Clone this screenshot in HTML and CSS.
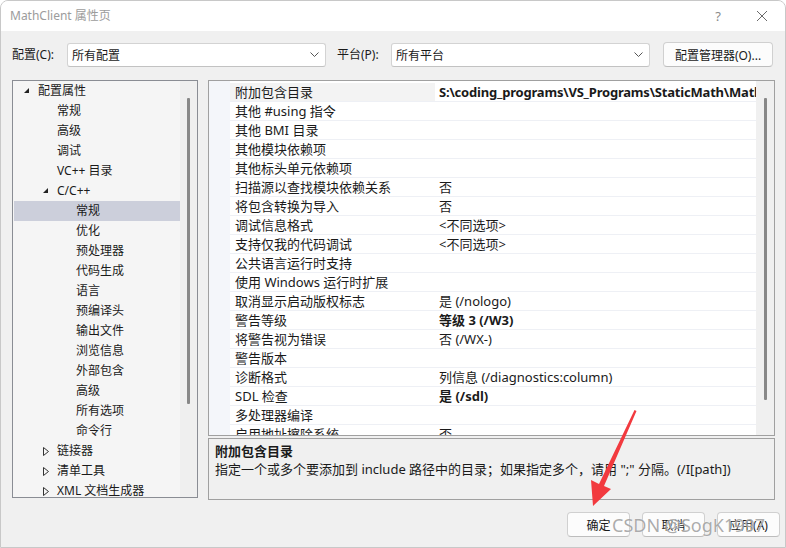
FILE: index.html
```html
<!DOCTYPE html>
<html lang="zh-CN">
<head>
    <meta charset="UTF-8">
    <title>MathClient 属性页</title>
    <link rel="stylesheet" href="styles.css">
</head>
<body>
    <div class="window">
        <div class="titlebar">
            <span class="title">MathClient 属性页</span>
            <span class="help">?</span>
            <svg class="close" width="12" height="12" viewBox="0 0 12 12">
                <path d="M1 1 L11 11 M11 1 L1 11" stroke="#6a6a6a" stroke-width="1" fill="none"/>
            </svg>
        </div>

        <div class="toolbar">
            <span class="label label-config">配置(C):</span>
            <div class="combo">
                <span>所有配置</span>
                <svg width="9" height="5" viewBox="0 0 9 5"><path d="M0.5 0.5 L4.5 4.5 L8.5 0.5" stroke="#555" fill="none"/></svg>
            </div>
            <span class="label label-platform">平台(P):</span>
            <div class="combo">
                <span>所有平台</span>
                <svg width="9" height="5" viewBox="0 0 9 5"><path d="M0.5 0.5 L4.5 4.5 L8.5 0.5" stroke="#555" fill="none"/></svg>
            </div>
            <div class="btn btn-manager">配置管理器(O)...</div>
        </div>

        <div class="main">
            <!-- property tree -->
            <div class="tree">
                <div class="tree-list">
                    <div class="node lvl0"><span class="arrow"><svg width="6" height="6" viewBox="0 0 6 6"><polygon points="5,0 5,5 0,5" fill="#222"/></svg></span>配置属性</div>
                    <div class="node lvl1"><span class="arrow"></span>常规</div>
                    <div class="node lvl1"><span class="arrow"></span>高级</div>
                    <div class="node lvl1"><span class="arrow"></span>调试</div>
                    <div class="node lvl1"><span class="arrow"></span>VC++ 目录</div>
                    <div class="node lvl1"><span class="arrow"><svg width="6" height="6" viewBox="0 0 6 6"><polygon points="5,0 5,5 0,5" fill="#222"/></svg></span>C/C++</div>
                    <div class="node lvl2 selected"><span class="arrow"></span>常规</div>
                    <div class="node lvl2"><span class="arrow"></span>优化</div>
                    <div class="node lvl2"><span class="arrow"></span>预处理器</div>
                    <div class="node lvl2"><span class="arrow"></span>代码生成</div>
                    <div class="node lvl2"><span class="arrow"></span>语言</div>
                    <div class="node lvl2"><span class="arrow"></span>预编译头</div>
                    <div class="node lvl2"><span class="arrow"></span>输出文件</div>
                    <div class="node lvl2"><span class="arrow"></span>浏览信息</div>
                    <div class="node lvl2"><span class="arrow"></span>外部包含</div>
                    <div class="node lvl2"><span class="arrow"></span>高级</div>
                    <div class="node lvl2"><span class="arrow"></span>所有选项</div>
                    <div class="node lvl2"><span class="arrow"></span>命令行</div>
                    <div class="node lvl1"><span class="arrow"><svg width="6" height="9" viewBox="0 0 6 9"><polygon points="0.5,0.5 5.5,4.5 0.5,8.5" fill="none" stroke="#333"/></svg></span>链接器</div>
                    <div class="node lvl1"><span class="arrow"><svg width="6" height="9" viewBox="0 0 6 9"><polygon points="0.5,0.5 5.5,4.5 0.5,8.5" fill="none" stroke="#333"/></svg></span>清单工具</div>
                    <div class="node lvl1"><span class="arrow"><svg width="6" height="9" viewBox="0 0 6 9"><polygon points="0.5,0.5 5.5,4.5 0.5,8.5" fill="none" stroke="#333"/></svg></span>XML 文档生成器</div>
                </div>
                <div class="scroll"><div class="thumb tree-thumb"></div></div>
            </div>

            <div class="right">
                <!-- property grid -->
                <div class="grid">
                    <div class="gutter"></div>
                    <div class="rows">
                        <div class="row first"><div class="name">附加包含目录</div><div class="value bold path">S:\coding_programs\VS_Programs\StaticMath\MathLib\include</div></div>
                        <div class="row"><div class="name">其他 #using 指令</div><div class="value"></div></div>
                        <div class="row"><div class="name">其他 BMI 目录</div><div class="value"></div></div>
                        <div class="row"><div class="name">其他模块依赖项</div><div class="value"></div></div>
                        <div class="row"><div class="name">其他标头单元依赖项</div><div class="value"></div></div>
                        <div class="row"><div class="name">扫描源以查找模块依赖关系</div><div class="value">否</div></div>
                        <div class="row"><div class="name">将包含转换为导入</div><div class="value">否</div></div>
                        <div class="row"><div class="name">调试信息格式</div><div class="value">&lt;不同选项&gt;</div></div>
                        <div class="row"><div class="name">支持仅我的代码调试</div><div class="value">&lt;不同选项&gt;</div></div>
                        <div class="row"><div class="name">公共语言运行时支持</div><div class="value"></div></div>
                        <div class="row"><div class="name">使用 Windows 运行时扩展</div><div class="value"></div></div>
                        <div class="row"><div class="name">取消显示启动版权标志</div><div class="value">是 (/nologo)</div></div>
                        <div class="row"><div class="name">警告等级</div><div class="value bold">等级 3 (/W3)</div></div>
                        <div class="row"><div class="name">将警告视为错误</div><div class="value">否 (/WX-)</div></div>
                        <div class="row"><div class="name">警告版本</div><div class="value"></div></div>
                        <div class="row"><div class="name">诊断格式</div><div class="value">列信息 (/diagnostics:column)</div></div>
                        <div class="row"><div class="name">SDL 检查</div><div class="value bold">是 (/sdl)</div></div>
                        <div class="row"><div class="name">多处理器编译</div><div class="value"></div></div>
                        <div class="row"><div class="name">启用地址擦除系统</div><div class="value">否</div></div>
                    </div>
                    <div class="scroll grid-scroll"><div class="thumb grid-thumb"></div></div>
                </div>

                <div class="desc">
                    <div class="desc-title">附加包含目录</div>
                    <div class="desc-text">指定一个或多个要添加到 include 路径中的目录；如果指定多个，请用 ";" 分隔。(/I[path])</div>
                </div>
            </div>
        </div>

        <div class="footer">
            <div class="btn">确定</div>
            <div class="btn">取消</div>
            <div class="btn">应用(A)</div>
        </div>

        <!-- annotation overlays -->
        <svg class="red-arrow" width="786" height="548" viewBox="0 0 786 548">
            <polygon points="634.5,410 636.5,411 604,486 611,489 593,506 591,480 599,484" fill="#f23a3f"/>
        </svg>
        <div class="watermark">CSDN @SogK1997</div>
    </div>
</body>
</html>
```

FILE: styles.css
```css
/* Reset */
body, html {
    margin: 0;
    padding: 0;
    background: #ffffff;
    font-family: "Noto Sans", "Noto Sans CJK SC", sans-serif;
    font-size: 12px;
    color: #1a1a1a;
}

.window {
    position: relative;
    width: 786px;
    height: 548px;
    box-sizing: border-box;
    border: 1px solid #c8c8c8;
    border-radius: 8px 8px 0 0;
    background: #f0f0f0;
    overflow: hidden;
}

/* Title bar */
.titlebar {
    height: 30px;
    background: #ffffff;
    display: flex;
    align-items: center;
    padding-left: 9px;
}

.title {
    color: #9c9c9c;
    font-size: 12px;
    margin-top: -2px;
}

.help {
    margin-left: auto;
    color: #8a8a8a;
    font-size: 13px;
}

.close {
    margin-left: 35px;
    margin-right: 17px;
}

/* Configuration row */
.toolbar {
    display: flex;
    align-items: center;
    height: 25px;
    padding: 11px 0 0 11px;
}

.label {
    line-height: 16px;
}

.label-config {
    width: 55px;
}

.label-platform {
    width: 54px;
    margin-left: 11px;
}

.combo {
    width: 259px;
    height: 24px;
    box-sizing: border-box;
    background: #ffffff;
    border: 1px solid #d3d3d3;
    border-bottom-color: #c2c2c2;
    border-radius: 3px;
    display: flex;
    align-items: center;
    justify-content: space-between;
    padding: 0 6px 0 4px;
}

.btn {
    width: 63px;
    height: 25px;
    box-sizing: border-box;
    background: #fcfcfc;
    border: 1px solid #d0d0d0;
    border-bottom-color: #bdbdbd;
    border-radius: 4px;
    display: flex;
    align-items: center;
    justify-content: center;
}

.btn-manager {
    width: 110px;
    margin-left: 13px;
}

/* Main area */
.main {
    display: flex;
    gap: 10px;
    margin-top: 13px;
    padding-left: 11px;
}

.tree {
    width: 186px;
    height: 418px;
    box-sizing: border-box;
    border: 1px solid #8a8d94;
    background: #f5f5f5;
    display: flex;
    overflow: hidden;
}

.tree-list {
    flex: 1;
    padding-left: 1px;
}

.node {
    height: 20px;
    line-height: 20px;
    display: flex;
    align-items: center;
    white-space: nowrap;
}

.node.lvl0 { padding-left: 10px; }
.node.lvl1 { padding-left: 29px; }
.node.lvl2 { padding-left: 48px; }

.node.selected {
    background: #cccfdb;
}

.arrow {
    width: 14px;
    display: flex;
    align-items: center;
}

.scroll {
    width: 17px;
    flex-shrink: 0;
    background: #efefef;
    padding-top: 17px;
    box-sizing: border-box;
}

.thumb {
    width: 3px;
    margin-left: 7px;
    background: #888888;
    border-radius: 1px;
}

.tree-thumb {
    height: 306px;
}

.right {
    width: 567px;
    display: flex;
    flex-direction: column;
    gap: 2px;
}

/* Property grid */
.grid {
    height: 356px;
    box-sizing: border-box;
    border: 1px solid #a0a0a0;
    background: #ffffff;
    display: flex;
    overflow: hidden;
    font-size: 13px;
}

.gutter {
    width: 21px;
    background: #f4f6fa;
}

.rows {
    width: 526px;
    padding-top: 2px;
}

.row {
    display: flex;
    height: 19px;
    box-sizing: border-box;
    border-bottom: 1px solid #eef0f5;
    line-height: 19px;
    white-space: nowrap;
}

.row .name {
    width: 205px;
    padding-left: 5px;
    box-sizing: border-box;
}

.row.first .name {
    background: #f3f3f3;
}

.row .value {
    flex: 1;
    padding-left: 4px;
    overflow: hidden;
}

.bold {
    font-weight: bold;
}

.path {
    letter-spacing: -0.2px;
}

.grid-scroll {
    width: 18px;
    background: #f0f0f0;
}

.grid-thumb {
    margin-left: 8px;
    height: 302px;
}

/* Description box */
.desc {
    height: 62px;
    box-sizing: border-box;
    border: 1px solid #a0a0a0;
    background: #f0f0f0;
    padding: 4px 0 0 6px;
    font-size: 13px;
}

.desc-title {
    font-weight: bold;
    line-height: 17px;
}

.desc-text {
    line-height: 18px;
}

/* Dialog buttons */
.footer {
    display: flex;
    justify-content: flex-end;
    gap: 12px;
    margin-top: 12px;
    padding-right: 5px;
}

/* Screenshot annotations */
.red-arrow {
    position: absolute;
    top: -1px;
    left: -1px;
    pointer-events: none;
}

.watermark {
    position: absolute;
    left: 611px;
    top: 511px;
    font-size: 18px;
    line-height: 26px;
    white-space: nowrap;
    color: rgba(100, 100, 100, 0.55);
    text-shadow: 0 0 1px #ffffff;
    pointer-events: none;
}
```
